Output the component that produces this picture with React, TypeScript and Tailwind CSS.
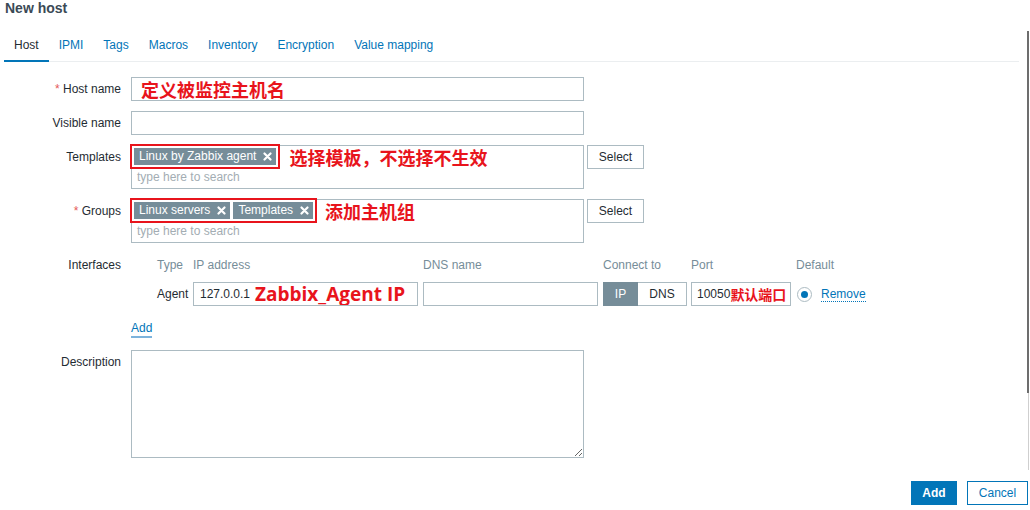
import React from "react";

const RED = "text-[#e8141c]";

function XIcon() {
  return (
    <svg width="9" height="9" viewBox="0 0 9 9" className="shrink-0">
      <path d="M1.5 1.5 L7.5 7.5 M7.5 1.5 L1.5 7.5" stroke="white" strokeWidth="2.2" strokeLinecap="round" />
    </svg>
  );
}

function Chip({ label }: { label: string }) {
  return (
    <span className="flex items-center h-[17px] bg-[#768d99] text-white pl-[5px] pr-[4px] gap-[7px] leading-[17px] whitespace-nowrap">
      {label}
      <XIcon />
    </span>
  );
}

function Label({ text, required }: { text: string; required?: boolean }) {
  return (
    <div className="w-[121px] shrink-0 text-right h-[24px] leading-[24px] whitespace-nowrap">
      {required && <span className="text-[#e45959]">* </span>}
      {text}
    </div>
  );
}

function SelectBtn() {
  return (
    <div className="ml-[3px] w-[57px] h-[24px] border border-[#acbbc2] flex items-center justify-center text-[#1f2c33] bg-white">
      Select
    </div>
  );
}

function Multi({ chips, note, gap }: { chips: string[]; note: string; gap: string }) {
  return (
    <div className="flex">
      <div className="w-[453px] h-[44px] border border-[#acbbc2] bg-white">
        <div className="flex items-center mt-[2px] ml-[2px] h-[17px]">
          <div className="flex gap-[3px] outline-2 outline-[#e8141c] outline-offset-2">
            {chips.map((c) => (
              <Chip key={c} label={c} />
            ))}
          </div>
          <span className={gap + " text-[18px] leading-[20px] font-bold font-['Noto_Sans_CJK_SC',sans-serif] " + RED}>
            {note}
          </span>
        </div>
        <div className="ml-[5px] mt-[5px] leading-[14px] text-[#a3adb3]">type here to search</div>
      </div>
      <SelectBtn />
    </div>
  );
}

export default function App() {
  const tabs = ["Host", "IPMI", "Tags", "Macros", "Inventory", "Encryption", "Value mapping"];
  return (
    <div className="relative w-[1030px] h-[510px] overflow-hidden bg-white text-[12px] text-[#1f2c33] font-['Liberation_Sans','Noto_Sans_CJK_SC',sans-serif]">
      <div className="h-[30px] pl-[5px] text-[14px] leading-[16px] font-bold text-[#3b4a56]">New host</div>

      <div className="ml-[4px] w-[1015px] flex border-b border-[#ebeef0]">
        {tabs.map((t, i) => (
          <div
            key={t}
            className={
              i === 0
                ? "px-[10px] pt-[8px] pb-[8px] leading-[14px] border-b-2 border-[#0275b8] -mb-px text-[#1f2c33]"
                : "px-[10px] pt-[8px] pb-[8px] leading-[14px] border-b-2 border-transparent -mb-px text-[#0275b8]"
            }
          >
            {t}
          </div>
        ))}
      </div>

      <div className="pt-[15px]">
        {/* Host name */}
        <div className="flex">
          <Label text="Host name" required />
          <div className="ml-[10px] w-[453px] h-[24px] border border-[#acbbc2] flex items-center pl-[9px]">
            <span className={"text-[18px] leading-[20px] font-bold font-['Noto_Sans_CJK_SC',sans-serif] " + RED}>定义被监控主机名</span>
          </div>
        </div>

        {/* Visible name */}
        <div className="flex mt-[10px]">
          <Label text="Visible name" />
          <div className="ml-[10px] w-[453px] h-[24px] border border-[#acbbc2]" />
        </div>

        {/* Templates */}
        <div className="flex mt-[10px]">
          <Label text="Templates" />
          <div className="ml-[10px]">
            <Multi chips={["Linux by Zabbix agent"]} note="选择模板，不选择不生效" gap="ml-[13px]" />
          </div>
        </div>

        {/* Groups */}
        <div className="flex mt-[10px]">
          <Label text="Groups" required />
          <div className="ml-[10px]">
            <Multi chips={["Linux servers", "Templates"]} note="添加主机组" gap="ml-[12px]" />
          </div>
        </div>

        {/* Interfaces */}
        <div className="flex mt-[10px]">
          <Label text="Interfaces" />
          <div className="ml-[10px]">
            <div className="flex h-[24px] items-center text-[#768d99] whitespace-nowrap">
              <div className="w-[26px]" />
              <div className="w-[36px]">Type</div>
              <div className="w-[230px]">IP address</div>
              <div className="w-[180px]">DNS name</div>
              <div className="w-[88px]">Connect to</div>
              <div className="w-[105px]">Port</div>
              <div>Default</div>
            </div>
            <div className="flex h-[24px] items-center mt-[5px] whitespace-nowrap">
              <div className="w-[26px]" />
              <div className="w-[36px]">Agent</div>
              <div className="w-[230px]">
                <div className="w-[225px] h-[24px] border border-[#acbbc2] flex items-center pl-[6px] overflow-hidden">
                  <span>127.0.0.1</span>
                  <span className={"ml-[5px] text-[19px] leading-[20px] font-bold font-['Open_Sans',sans-serif] " + RED}>Zabbix_Agent IP</span>
                </div>
              </div>
              <div className="w-[180px]">
                <div className="w-[175px] h-[24px] border border-[#acbbc2]" />
              </div>
              <div className="w-[88px]">
                <div className="w-[84px] h-[24px] flex">
                  <div className="w-[35px] h-[24px] bg-[#768d99] text-white flex items-center justify-center border border-[#768d99]">IP</div>
                  <div className="flex-1 h-[24px] border border-l-0 border-[#acbbc2] flex items-center justify-center">DNS</div>
                </div>
              </div>
              <div className="w-[105px]">
                <div className="w-[100px] h-[24px] border border-[#acbbc2] flex items-center pl-[5px] overflow-hidden">
                  <span>10050</span>
                  <span className={"text-[14px] leading-[16px] font-bold font-['Noto_Sans_CJK_SC',sans-serif] " + RED}>默认端口</span>
                </div>
              </div>
              <div className="flex items-center">
                <div className="ml-[1px] w-[15px] h-[15px] rounded-full border border-[#acbbc2] flex items-center justify-center">
                  <div className="w-[7px] h-[7px] rounded-full bg-[#0275b8]" />
                </div>
                <span className="ml-[9px] text-[#0275b8] leading-[14px] border-b border-dotted border-[#0275b8]">Remove</span>
              </div>
            </div>
          </div>
        </div>

        {/* Add link */}
        <div className="mt-[15px] pl-[131px] flex">
          <span className="text-[#0275b8] leading-[14px] pb-[1px] border-b-2 border-[#7db3dc]">Add</span>
        </div>

        {/* Description */}
        <div className="flex mt-[12px]">
          <Label text="Description" />
          <textarea readOnly className="ml-[10px] block w-[453px] h-[108px] border border-[#acbbc2] outline-none" />
        </div>

        {/* Buttons */}
        <div className="flex justify-end gap-[10px] pr-[2px] mt-[23px]">
          <div className="w-[46px] h-[24px] bg-[#0275b8] text-white font-bold flex items-center justify-center">Add</div>
          <div className="w-[61px] h-[24px] border border-[#0275b8] text-[#0275b8] flex items-center justify-center">Cancel</div>
        </div>
      </div>

      {/* scrollbar overlay */}
      <div className="absolute left-[1027px] top-[31px] w-[2px] h-[362px] bg-[#6d6d6d]" />
      <div className="absolute left-[1028px] top-[393px] w-[1px] h-[77px] bg-[#cfcfcf]" />
    </div>
  );
}
